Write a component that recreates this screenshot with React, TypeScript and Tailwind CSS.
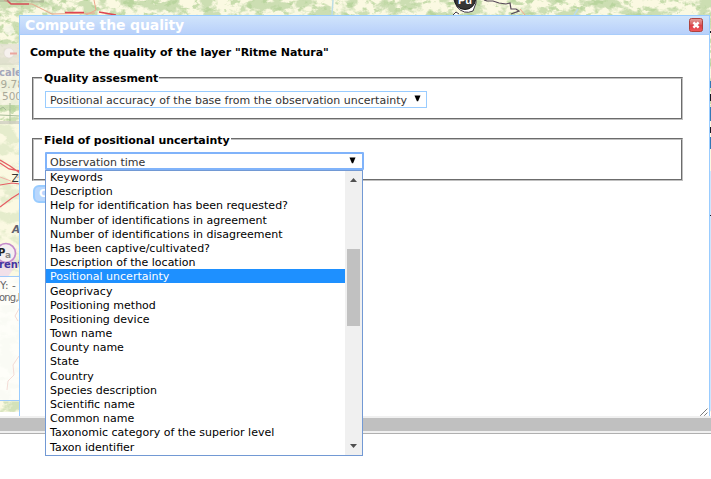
import React from "react";

const FIELDS: string[] = [
  "Keywords",
  "Description",
  "Help for identification has been requested?",
  "Number of identifications in agreement",
  "Number of identifications in disagreement",
  "Has been captive/cultivated?",
  "Description of the location",
  "Positional uncertainty",
  "Geoprivacy",
  "Positioning method",
  "Positioning device",
  "Town name",
  "County name",
  "State",
  "Country",
  "Species description",
  "Scientific name",
  "Common name",
  "Taxonomic category of the superior level",
  "Taxon identifier",
];

function MapBackdrop() {
  return (
    <svg className="absolute left-0 top-0" width="711" height="412" viewBox="0 0 711 412">
      <defs>
        <filter id="hills" x="0" y="0" width="100%" height="100%" colorInterpolationFilters="sRGB">
          <feTurbulence type="fractalNoise" baseFrequency="0.06 0.09" numOctaves="5" seed="5" />
          <feColorMatrix values="0 0 0 0 0.80  0 0 0 0 0.87  0 0 0 0 0.70  7 0 0 0 -3.2" />
        </filter>
        <filter id="woods" x="0" y="0" width="100%" height="100%" colorInterpolationFilters="sRGB">
          <feTurbulence type="fractalNoise" baseFrequency="0.11 0.16" numOctaves="4" seed="21" />
          <feColorMatrix values="0 0 0 0 0.70  0 0 0 0 0.82  0 0 0 0 0.59  0 7 0 0 -3.9" />
        </filter>
      </defs>
      <rect width="711" height="412" fill="#fbf9e2" />
      <rect width="711" height="124" filter="url(#hills)" />
      <rect width="711" height="124" filter="url(#woods)" opacity="0.7" />
      <rect y="124" width="20" height="288" filter="url(#hills)" opacity="0.45" />
      {/* roads */}
      <g fill="none" stroke="#e8888a" strokeWidth="1">
        <path d="M4 0 Q10 5 18 4 L32 4 L44 10 L52 14 L95 13" stroke="#eaa58c" />
        <path d="M7 0 L11 4 L29 4" stroke="#d2565c" strokeWidth="1.5" />
        <path d="M65 12.5 H84 M99 12 L116 15" stroke="#df4552" strokeWidth="1.5" />
        <path d="M94 0 L96 10 L86 15" stroke="#efa78d" />
        <path d="M520 9 L525 15" stroke="#efa78d" />
        <path d="M0 160 L10 166 L20 173 M0 163 L9 169 L20 171" stroke="#e65c62" strokeWidth="1.3" />
        <path d="M0 185 L12 183 L20 184 M0 207 L12 198 L20 193" stroke="#e65c62" strokeWidth="1.2" />
        <path d="M0 177 L11 181 M17 178 L20 176" stroke="#f1afa6" />
      </g>
      {/* river and border */}
      <path d="M333 0 L332 15 M578 9 L574 15" fill="none" stroke="#bcdce6" strokeWidth="1.5" />
      <path d="M484 0 L487 1 L493 1 L499 3 L506 4 L510 3 L511 9 L516 9 L519 11 L511 14" fill="none" stroke="#574858" strokeWidth="1.2" />
      {/* marker */}
      <path d="M453 15 L456 12 L459 14 M454 0 L457 7 Q464 15 473 11 L476 3 L476 0Z" fill="#fff" stroke="#433a48" />
      <circle cx="465" cy="-1" r="10.5" fill="#363636" stroke="#151515" />
      <text x="458" y="4" fontFamily="Liberation Sans, sans-serif" fontWeight="700" fontSize="11" fill="#fff">Pu</text>
      {/* navigation controls */}
      <path d="M0 0 H44 V2 H0Z" fill="#999a85" opacity="0.35" />
      <path d="M31 2 H44" stroke="#9e9e86" opacity="0.6" />
      <rect y="44" width="20" height="21" fill="#e5e1d4" opacity="0.8" />
      <circle cx="9" cy="30" r="5" fill="#f5f5e7" opacity="0.75" />
      <circle cx="9" cy="53" r="5" fill="#f6f1ee" stroke="#dfd6d2" strokeWidth="0.6" />
      <path d="M10 53.5 H17" stroke="#eba69f" strokeWidth="2" />
      <rect y="65" width="20" height="40" fill="#f7f5e6" opacity="0.78" />
      <g fontFamily="DejaVu Sans, sans-serif" fontSize="10.5">
        <text x="-1" y="76" fill="#a5a7bb" fontWeight="700" fontSize="10">cale</text>
        <text x="0.5" y="88" fill="#aaa999">9.78</text>
        <text x="2" y="100" fill="#aaa999">500</text>
      </g>
      <path d="M0 109 L3 107 L6 110 M10 103 V124 M0 115 L20 116" fill="none" stroke="#a8bc98" />
      <rect y="121" width="20" height="3" fill="#d0cec2" opacity="0.8" />
      <text x="11.5" y="182" fontFamily="DejaVu Sans, sans-serif" fontSize="10.5" fill="#333">Za</text>
      <text x="12" y="233" fontFamily="DejaVu Sans, sans-serif" fontStyle="italic" fontWeight="700" fontSize="10.5" fill="#62626f">A</text>
      {/* river station */}
      <path d="M0 260 L17 248 L14 268 L3 284 L0 284Z" fill="#edcfee" opacity="0.6" />
      <circle cx="6" cy="253" r="9.5" fill="#f4eff1" stroke="#c48aca" strokeWidth="1.7" />
      <g fontFamily="DejaVu Sans, sans-serif" fontWeight="700">
        <text x="-2" y="256" fontSize="10" fill="#222">P</text>
        <text x="5" y="258" fontSize="9" fill="#888">a</text>
        <text x="-1" y="267.5" fontSize="10" fill="#4434a0">rent</text>
      </g>
      {/* coordinates panel */}
      <rect x="-1" y="276.5" width="22" height="124" fill="#fff" fillOpacity="0.8" stroke="#9dcafa" />
      <path d="M20 307 L15 316 L18 321 M19 356 L13 365 L14 375 L8 381 L7 390" stroke="#f4dcd6" fill="none" />
      <g fontFamily="DejaVu Sans, sans-serif" fontSize="10.5" fill="#666">
        <text x="0" y="289">Y: -</text>
        <text x="-1" y="301" fontSize="10" letterSpacing="-0.8">ong,l</text>
      </g>
      <rect y="402" width="20" height="10" filter="url(#hills)" opacity="0.7" />
      {/* right edge of the map */}
      <path d="M710 81h1v7h-1z M710 107h1v14h-1z M710 137h1v12h-1z" fill="#3478b4" />
      <path d="M710 31h1v2h-1z M710 94h1v7h-1z M710 127h1v6h-1z M710 215h1v1h-1z" fill="#151923" />
      <path d="M710 171h1v44h-1z M710 216h1v195h-1z" fill="#cfe5fc" />
    </svg>
  );
}

function CloseButton() {
  return (
    <button type="button" aria-label="Close" className="block h-[14px] w-[14px]">
      <svg width="14" height="14" viewBox="0 0 14 14">
        <defs>
          <linearGradient id="close" x1="0" y1="0" x2="0" y2="1">
            <stop offset="0" stopColor="#e4a09b" />
            <stop offset="0.45" stopColor="#db6062" />
            <stop offset="0.5" stopColor="#d83f47" />
            <stop offset="1" stopColor="#f2575b" />
          </linearGradient>
        </defs>
        <rect x="0.5" y="0.5" width="13" height="13" rx="2" fill="url(#close)" stroke="#ae423d" />
        <path d="M4.4 4.4 L9.6 9.6 M9.6 4.4 L4.4 9.6" stroke="#fff" strokeWidth="2.5" />
      </svg>
    </button>
  );
}

function Arrow({ className }: { className: string }) {
  return (
    <svg width="7" height="7" viewBox="0 0 7 7" className={className}>
      <path d="M0.5 0.5 H6.5 L4.1 6.3 H2.9Z" fill="#000" />
    </svg>
  );
}

export default function App() {
  return (
    <div className="relative h-[479px] w-[711px] overflow-hidden bg-white font-['DejaVu_Sans',sans-serif] text-[11px] text-black">
      <MapBackdrop />

      <div className="absolute left-0 top-[416px] h-[18px] w-full border-b border-[#b0b0b0] bg-[#f0f0f0] pt-[2px]">
        <div className="h-[13px] bg-[#c0c0c0]" />
      </div>

      <section className="absolute left-[19px] top-[15px] h-[401px] w-[691px] border-x border-t border-[#99ccff] bg-white">
        <header className="flex h-[19px] items-center justify-between border-b border-[#a9cdfb] bg-linear-to-b from-[#d0e4fb] to-[#b8d0fa] pl-[5px] pr-[6px]">
          <h1 className="whitespace-nowrap text-[14px] font-bold leading-[18px] tracking-[-0.12px] text-white">Compute the quality</h1>
          <CloseButton />
        </header>
        <div className="pl-[10px] pr-[26px] pt-[11px]">
          <p className="h-[14px] whitespace-nowrap font-bold leading-[14px] tracking-[-0.03px]">Compute the quality of the layer "Ritme Natura"</p>

          <fieldset className="ml-[2px] mt-[11px] h-[49px] border-2 border-[#c0c0c0] pl-[11px] [border-style:groove]">
            <legend className="-ml-[3px] h-[14px] whitespace-nowrap pl-[2px] pr-px font-bold leading-[16px] tracking-[-0.04px]">Quality assesment</legend>
            <div className="mt-[6px] flex h-[17px] w-[382px] items-center justify-between border border-[#99ccff] pl-[4px] pr-[5px]">
              <span className="whitespace-nowrap pt-px leading-[15px] text-[#333]">Positional accuracy of the base from the observation uncertainty</span>
              <Arrow className="-mt-[2px]" />
            </div>
          </fieldset>

          <fieldset className="ml-[2px] mt-[12px] h-[49px] border-2 border-[#c0c0c0] pl-[11px] [border-style:groove]">
            <legend className="-ml-[3px] h-[14px] whitespace-nowrap pl-[2px] pr-px pt-px font-bold leading-[16px] tracking-[-0.06px]">Field of positional uncertainty</legend>
            <div className="mt-[6px] flex h-[18px] w-[319px] items-center justify-between rounded-[1px] border-2 border-[#80b3fa] pl-[3px] pr-[6px]">
              <span className="whitespace-nowrap pt-[4px] leading-[16px] text-[#333]">Observation time</span>
              <Arrow className="-mt-[1px]" />
            </div>
          </fieldset>

          <button type="button" className="ml-[3px] mt-[4px] block h-[18px] w-[70px] rounded-[6px] border-2 border-[#99ccff] bg-[#b9d7fd] pl-[4px] text-left text-[11px] font-bold leading-[14px] text-white">
            C
          </button>
        </div>
        <svg width="8" height="8" viewBox="0 0 8 8" className="absolute bottom-0 right-px">
          <path d="M0.5 7.5 L7.5 0.5 M4.5 7.5 L7.5 4.5" stroke="#333" strokeDasharray="1.1 0.3" />
        </svg>
      </section>

      <div className="absolute left-[45px] top-[170px] flex h-[286px] w-[318px] border border-[#7299d4] bg-white">
        <ul className="-mt-[1.8px] flex-1">
          {FIELDS.map((field) => (
            <li
              key={field}
              className={
                field === "Positional uncertainty"
                  ? "h-[14.2px] whitespace-nowrap bg-[#1e90ff] pl-[4px] pt-[0.8px] leading-[15px] text-white"
                  : "h-[14.2px] whitespace-nowrap pl-[4px] pt-[0.8px] leading-[15px]"
              }
            >
              {field}
            </li>
          ))}
        </ul>
        <div className="flex w-[17px] flex-col items-center bg-[#f0f0f0]">
          <svg width="7" height="4" viewBox="0 0 7 4" className="mt-[7px] shrink-0">
            <path d="M0 4 L3.5 0 L7 4Z" fill="#505050" />
          </svg>
          <div className="mt-[67px] h-[77px] w-[13px] bg-[#c1c1c1]" />
          <svg width="7" height="4" viewBox="0 0 7 4" className="mb-[7px] mt-auto shrink-0">
            <path d="M0 0 L3.5 4 L7 0Z" fill="#505050" />
          </svg>
        </div>
      </div>
    </div>
  );
}
